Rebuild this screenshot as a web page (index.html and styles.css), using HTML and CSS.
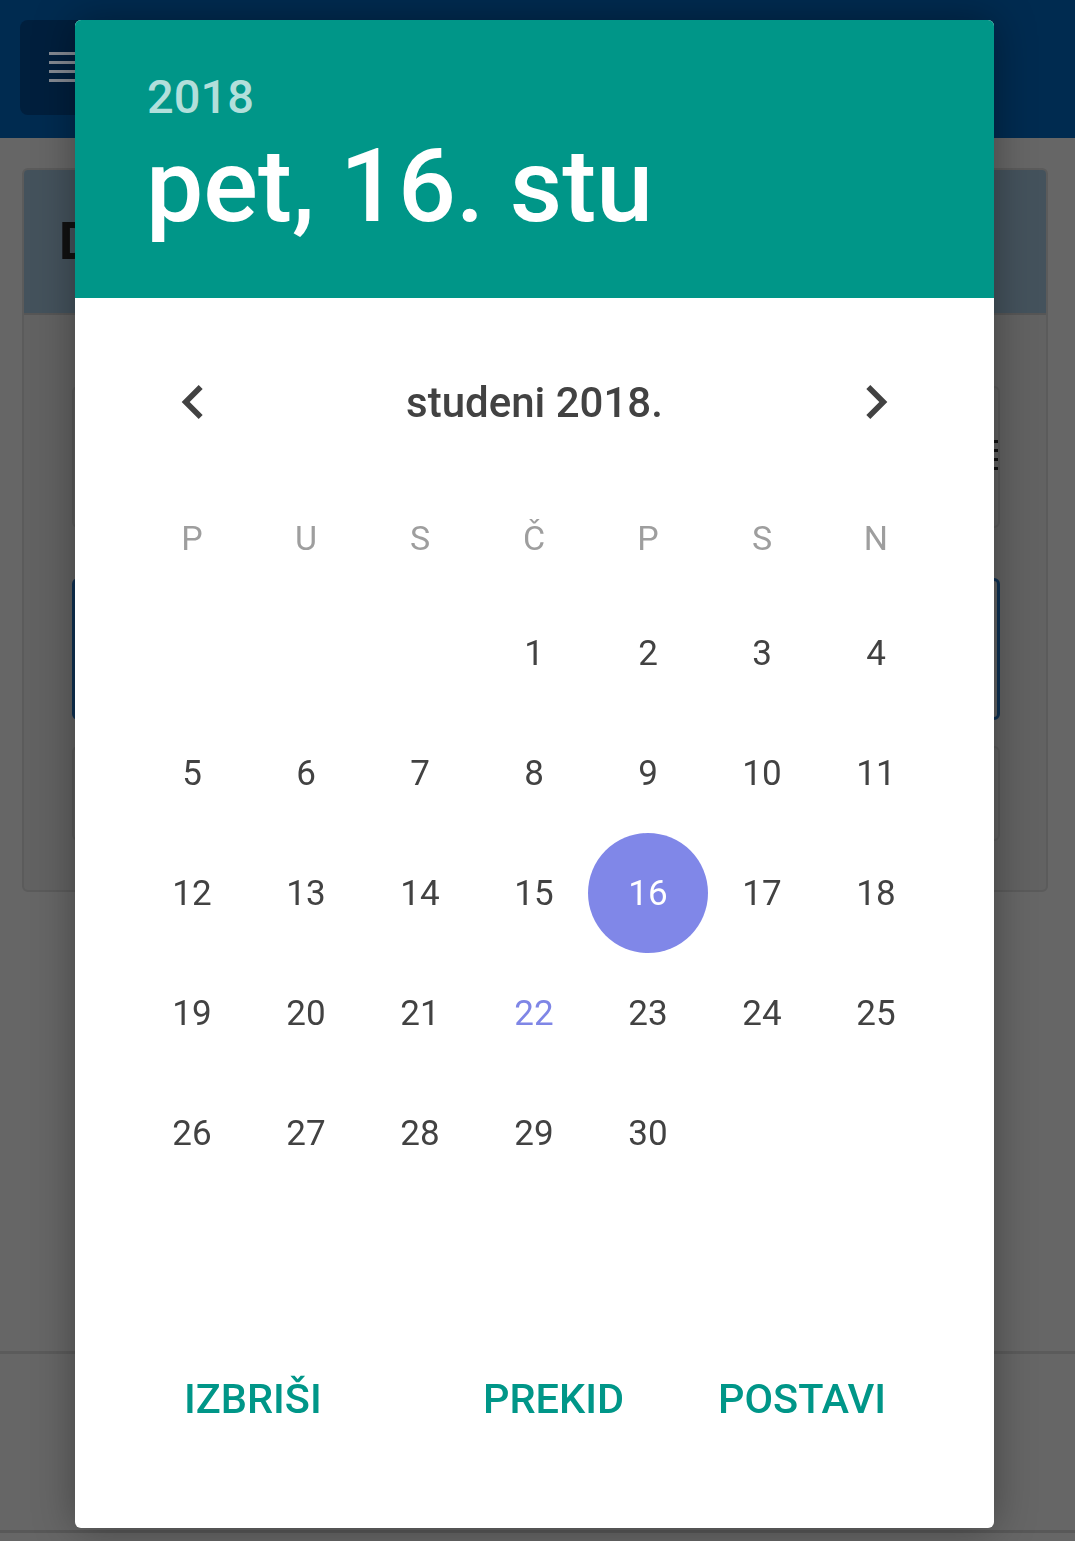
FILE: index.html
```html
<!DOCTYPE html>
<html lang="hr">
<head>
<meta charset="utf-8">
<title>Datum</title>
<link rel="stylesheet" href="styles.css">
</head>
<body>
<div class="page">
  <header class="topbar">
    <div class="menu-btn"><span></span><span></span><span></span><span></span></div>
  </header>
  <main class="content">
    <section class="card">
      <div class="card-head"><h2 class="card-title">D</h2></div>
      <div class="card-body">
        <div class="field field-a"><div class="field-icon"><i></i><i></i><i></i><i></i></div></div>
        <div class="field field-focus"></div>
        <div class="field field-c"></div>
      </div>
    </section>
  </main>
  <footer class="bottombar"></footer>
</div>

<div class="dialog" role="dialog">
  <div class="dlg-head">
    <div class="dlg-year">2018</div>
    <div class="dlg-date">pet, 16. stu</div>
  </div>
  <div class="dlg-body">
    <div class="month-row">
      <svg class="nav-arrow" viewBox="0 0 24 24"><path d="M15.41 7.41L14 6l-6 6 6 6 1.41-1.41L10.83 12z"/></svg>
      <div class="month-title">studeni 2018.</div>
      <svg class="nav-arrow" viewBox="0 0 24 24"><path d="M10 6L8.59 7.41 13.17 12l-4.58 4.59L10 18l6-6z"/></svg>
    </div>
    <div class="weekdays">
      <span>P</span><span>U</span><span>S</span><span>Č</span><span>P</span><span>S</span><span>N</span>
    </div>
    <div class="days">
      <span></span><span></span><span></span><span>1</span><span>2</span><span>3</span><span>4</span>
      <span>5</span><span>6</span><span>7</span><span>8</span><span>9</span><span>10</span><span>11</span>
      <span>12</span><span>13</span><span>14</span><span>15</span><span class="selected"><b>16</b></span><span>17</span><span>18</span>
      <span>19</span><span>20</span><span>21</span><span class="today">22</span><span>23</span><span>24</span><span>25</span>
      <span>26</span><span>27</span><span>28</span><span>29</span><span>30</span><span></span><span></span>
    </div>
    <div class="actions">
      <button class="btn">IZBRIŠI</button>
      <div class="actions-right">
        <button class="btn">PREKID</button>
        <button class="btn">POSTAVI</button>
      </div>
    </div>
  </div>
</div>
</body>
</html>
```

FILE: styles.css
```css
* { box-sizing: border-box; }
html, body { margin: 0; padding: 0; }
body {
  width: 1075px;
  height: 1541px;
  overflow: hidden;
  background: #666666;
  font-family: Roboto, "Noto Sans", "Liberation Sans", sans-serif;
}
.page { height: 1541px; display: flex; flex-direction: column; }

.topbar {
  height: 138px;
  background: #002b50;
  padding: 20px;
  flex: none;
}
.menu-btn {
  width: 100px;
  height: 95px;
  background: #001f3d;
  border-radius: 8px;
  padding: 32px 0 0 29px;
  display: flex;
  flex-direction: column;
  gap: 6px;
}
.menu-btn span { display: block; width: 30px; height: 3px; background: #848a93; }

.content { padding: 30px 27px 0 22px; flex: none; }
.card {
  width: 1026px;
  height: 724px;
  border: 2px solid #5b5b5b;
  border-radius: 6px;
  background: #626262;
  overflow: hidden;
}
.card-head {
  height: 145px;
  background: #44525c;
  border-bottom: 2px solid #565656;
  padding-left: 35px;
  display: flex;
  align-items: center;
}
.card-title { margin: 0; font-size: 52px; font-weight: 700; color: #111; }
.card-body { padding: 71px 46px 0 48px; display: flex; flex-direction: column; }
.field { border: 2px solid #5a5a5a; border-radius: 6px; position: relative; }
.field-a { height: 142px; }
.field-focus { height: 142px; margin-top: 50px; border: 3px solid #0f3152; }
.field-c { height: 95px; margin-top: 26px; }
.field-icon { position: absolute; right: 0; top: 52px; display: flex; flex-direction: column; gap: 6px; }
.field-icon i { display: block; width: 20px; height: 3px; background: #111; }

.bottombar { margin-top: auto; height: 182px; border-top: 3px solid #5b5b5b; border-bottom: 3px solid #585858; margin-bottom: 8px; }

.dialog {
  position: fixed;
  left: 75px;
  top: 20px;
  width: 919px;
  height: 1508px;
  background: #fff;
  border-radius: 6px;
  overflow: hidden;
  box-shadow: 0 0 40px rgba(0,0,0,0.35);
  display: flex;
  flex-direction: column;
}
.dlg-head {
  height: 278px;
  background: #009688;
  padding: 54px 0 0 73px;
  flex: none;
}
.dlg-year { font-size: 47px; line-height: 46px; font-weight: 500; color: #b2dfdb; margin-left: -1px; }
.dlg-date { font-size: 102px; line-height: 102px; font-weight: 500; color: #fff; margin-top: 15px; margin-left: -2px; }

.dlg-body { flex: 1; display: flex; flex-direction: column; padding: 70px 61px 90px 60px; }
.month-row { height: 68px; display: flex; align-items: center; justify-content: space-between; margin: 0 23px 0 24px; }
.nav-arrow { width: 68px; height: 68px; fill: #424242; }
.month-title { font-size: 42px; font-weight: 500; color: #424242; }

.weekdays, .days { display: grid; grid-template-columns: repeat(7, 114px); }
.weekdays { margin-top: 62px; height: 80px; }
.weekdays span { text-align: center; line-height: 80px; font-size: 34px; color: #9e9e9e; }
.days { margin-top: 15px; grid-auto-rows: 120px; }
.days span {
  display: flex;
  align-items: center;
  justify-content: center;
  font-size: 35px;
  color: #424242;
}
.days .today { color: #7f86e6; }
.days .selected b {
  flex: none;
  width: 120px;
  height: 120px;
  border-radius: 50%;
  background: #8087e8;
  color: #fff;
  font-weight: 400;
  display: flex;
  align-items: center;
  justify-content: center;
}

.actions { margin-top: auto; display: flex; justify-content: space-between; align-items: center; padding: 0 47px 0 49px; height: 80px; }
.actions-right { display: flex; gap: 94px; }
.btn {
  border: 0;
  background: none;
  padding: 0;
  font-family: inherit;
  font-size: 41.5px;
  font-weight: 500;
  color: #009688;
}
```
